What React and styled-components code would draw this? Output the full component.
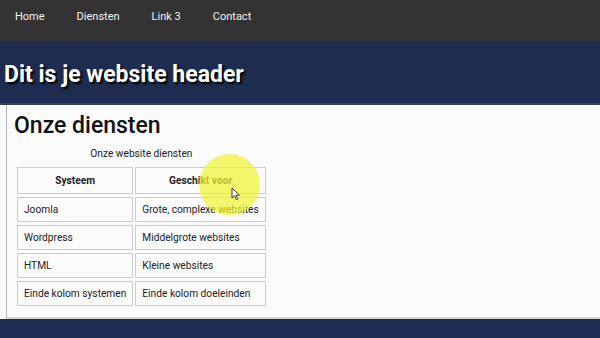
import React from "react";
import styled, { createGlobalStyle } from "styled-components";

const GlobalStyle = createGlobalStyle`
    html, body {
        margin: 0;
        padding: 0;
        background: #fbfbfb;
        font-family: Roboto, "Liberation Sans", sans-serif;
        overflow: hidden;
    }
`

const Page = styled.div`
    position: relative;
    width: 600px;
    height: 338px;
    display: flex;
    flex-direction: column;
`

const NavBar = styled.nav`
    height: 42px;
    background: #333333;
    display: flex;
    flex-direction: row;
    padding-left: 15px;
    gap: 32px;
    flex-shrink: 0;
`

const NavLink = styled.a`
    color: #f2f2f2;
    font-size: 11px;
    line-height: 14px;
    padding-top: 10px;
    text-decoration: none;
`

const Header = styled.header`
    height: 58px;
    background: #1e2d4f;
    border-bottom: 2px solid #3a4256;
    display: flex;
    align-items: center;
    padding-left: 4px;
    padding-top: 3px;
    flex-shrink: 0;
`

const HeaderTitle = styled.h1`
    margin: 0;
    color: #ffffff;
    font-size: 23px;
    font-weight: 700;
    text-shadow: 2px 2px 2px #000000;
`

const Main = styled.main`
    height: 206px;
    margin-left: 6px;
    border-left: 1px solid #b8b8b8;
    border-bottom: 2px solid #d4d4d4;
    background: #fbfbfb;
    padding: 6px 0 0 7px;
    flex-shrink: 0;
`

const Title = styled.h2`
    margin: 0;
    font-size: 23px;
    font-weight: 500;
    color: #111111;
    line-height: 30px;
`

const ServiceTable = styled.table`
    margin-top: 7px;
    margin-left: 1px;
    border-spacing: 2px 3px;
    font-size: 10.2px;
    color: #222222;
`

const Caption = styled.caption`
    padding-bottom: 5px;
    font-size: 10.2px;
    color: #222222;
`

const HeadCell = styled.th`
    border: 1px solid #cccccc;
    height: 25px;
    padding: 0 6px;
    font-weight: 700;
    text-align: center;
`

const Cell = styled.td`
    border: 1px solid #cccccc;
    height: 23px;
    padding: 0 6px;
    text-align: left;
`

const Footer = styled.footer`
    flex: 1;
    background: #1e2d4f;
`

const Highlight = styled.div`
    position: absolute;
    left: 199px;
    top: 154px;
    width: 61px;
    height: 61px;
    border-radius: 50%;
    background: rgba(240, 244, 50, 0.72);
    pointer-events: none;
`

const Cursor = styled.svg`
    position: absolute;
    left: 231px;
    top: 187px;
`

const rows = [
    ["Joomla", "Grote, complexe websites"],
    ["Wordpress", "Middelgrote websites"],
    ["HTML", "Kleine websites"],
    ["Einde kolom systemen", "Einde kolom doeleinden"],
]

const App = () => {
    return (
        <>
            <GlobalStyle />
            <Page>
                <NavBar>
                    <NavLink href="#">Home</NavLink>
                    <NavLink href="#">Diensten</NavLink>
                    <NavLink href="#">Link 3</NavLink>
                    <NavLink href="#">Contact</NavLink>
                </NavBar>
                <Header>
                    <HeaderTitle>Dit is je website header</HeaderTitle>
                </Header>
                <Main>
                    <Title>Onze diensten</Title>
                    <ServiceTable>
                        <Caption>Onze website diensten</Caption>
                        <thead>
                            <tr>
                                <HeadCell>Systeem</HeadCell>
                                <HeadCell>Geschikt voor</HeadCell>
                            </tr>
                        </thead>
                        <tbody>
                            {rows.map(([sys, use]) => (
                                <tr key={sys}>
                                    <Cell>{sys}</Cell>
                                    <Cell>{use}</Cell>
                                </tr>
                            ))}
                        </tbody>
                    </ServiceTable>
                </Main>
                <Footer />
                <Highlight />
                <Cursor width="10" height="14" viewBox="0 0 10 14">
                    <path d="M1 1 L1 11 L3.5 8.8 L5.3 12.6 L6.8 11.9 L5 8.2 L8.4 8.2 Z" fill="#ffffff" stroke="#222222" strokeWidth="0.9" strokeLinejoin="round" />
                </Cursor>
            </Page>
        </>
    )
}

export default App;
